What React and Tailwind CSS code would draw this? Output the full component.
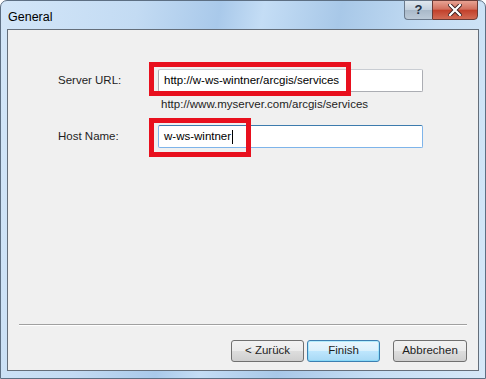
export default function App() {
  return (
    <div className="w-[486px] h-[379px] bg-white font-['Liberation_Sans',sans-serif] text-[11.5px] text-black">
      <div className="relative w-full h-full flex flex-col rounded-t-[7px] border border-[#5d6f83] bg-[linear-gradient(100deg,#d3e6f8_0%,#c3dbf3_25%,#a9c9ea_40%,#c4ddf5_48%,#a8c8e8_62%,#c6def4_80%,#d6e8f8_100%)]">
        {/* Title bar */}
        <div className="h-[28px] flex items-start shrink-0">
          <span className="ml-[7px] mt-[7px] text-[12.5px] text-black">General</span>
          <div className="ml-auto mr-[7px] flex h-[20px] -mt-px">
            <div className="w-[28px] h-full flex items-center justify-center rounded-bl-[4px] border border-[#6b7a8c] border-r-0 bg-[linear-gradient(#dfe7ef,#c3d0dd_50%,#a9b9c9_51%,#bccad8)] text-[#1f2f44] font-bold text-[13px]">
              ?
            </div>
            <div className="w-[46px] h-full flex items-center justify-center rounded-br-[4px] border border-[#6b3b36] bg-[linear-gradient(#e8a393,#d2705e_45%,#c2412c_52%,#d26b55)]">
              <svg width="14" height="12" viewBox="0 0 14 12">
                <path d="M2 1 L12 11 M12 1 L2 11" stroke="#3a2020" strokeWidth="4" strokeLinecap="square" />
                <path d="M2 1 L12 11 M12 1 L2 11" stroke="#ffffff" strokeWidth="2.2" strokeLinecap="square" />
              </svg>
            </div>
          </div>
        </div>

        {/* Client area */}
        <div className="flex-1 mx-[6px] mb-[7px] border border-[#646e7a] bg-[#f0f0f0] flex flex-col">
          <div className="flex-1 relative pt-[39px] pl-[50px] pr-[55px]">
            <div className="flex items-center">
              <span className="w-[100px] text-[#1e1e1e]">Server URL:</span>
              <div className="flex-1 h-[23px] flex items-center px-[5px] bg-white border border-[#abadb3] border-t-[#c9cdd3] rounded-[2px]">
                http://w-ws-wintner/arcgis/services
              </div>
            </div>
            <div className="pl-[103px] mt-[4px] text-[#1e1e1e]">http://www.myserver.com/arcgis/services</div>
            <div className="flex items-center mt-[12px]">
              <span className="w-[100px] text-[#1e1e1e]">Host Name:</span>
              <div className="flex-1 h-[23px] flex items-center px-[5px] bg-white border border-[#7eb4ea] border-t-[#3d7bad] rounded-[2px]">
                w-ws-wintner<span className="w-px h-[14px] bg-black ml-px" />
              </div>
            </div>

            {/* annotation boxes */}
            <div className="absolute left-[141px] top-[32px] w-[202px] h-[34px] border-[5px] border-[#e8101e]" />
            <div className="absolute left-[141px] top-[88px] w-[102px] h-[39px] border-[5px] border-[#e8101e]" />
          </div>

          <div className="mx-[11px] h-px bg-[#a0a0a0] border-b border-white box-content" />

          <div className="flex justify-end items-center gap-[3px] pt-[14px] pb-[8px] pr-[11px]">
            <button className="w-[73px] h-[22px] rounded-[3px] border border-[#707070] bg-[linear-gradient(#f2f2f2,#ebebeb_50%,#dddddd_51%,#cfcfcf)] text-[#1e1e1e]">
              &lt; Zurück
            </button>
            <button className="w-[73px] h-[22px] rounded-[3px] border border-[#3c7fb1] bg-[linear-gradient(#eaf6fd,#d9f0fc_50%,#bee6fd_51%,#a7d9f5)] text-[#1e1e1e] shadow-[inset_0_0_0_1px_#48d8fb55]">
              Finish
            </button>
            <button className="ml-[10px] w-[74px] h-[22px] rounded-[3px] border border-[#707070] bg-[linear-gradient(#f2f2f2,#ebebeb_50%,#dddddd_51%,#cfcfcf)] text-[#1e1e1e]">
              Abbrechen
            </button>
          </div>
        </div>
      </div>
    </div>
  );
}
